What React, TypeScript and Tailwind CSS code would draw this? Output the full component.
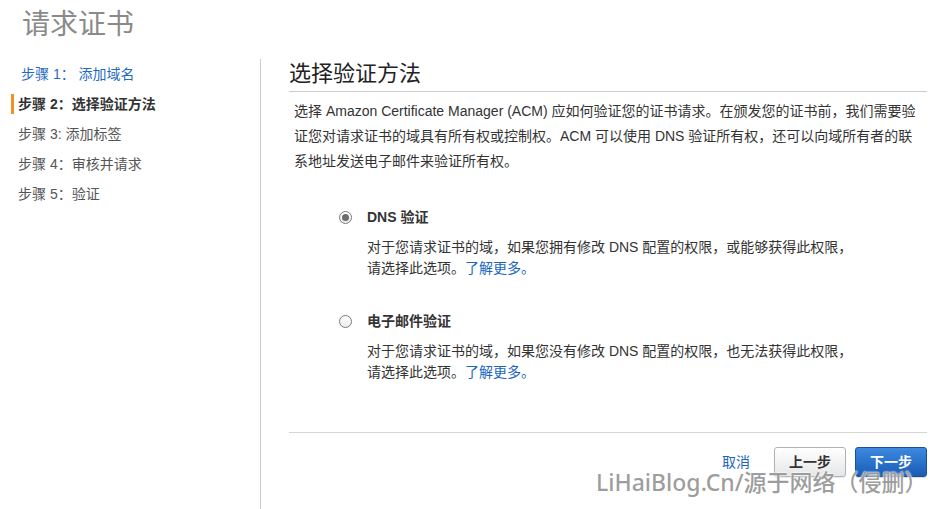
import React from "react";

const font = { fontFamily: '"Liberation Sans", "Noto Sans CJK SC", sans-serif' };

function Radio({ checked }: { checked: boolean }) {
  return (
    <div className="w-[13px] h-[13px] rounded-full border border-[#7a7a7a] bg-gradient-to-b from-[#ffffff] to-[#ececec] flex items-center justify-center shrink-0">
      {checked && <div className="w-[7px] h-[7px] rounded-full bg-[#6b6b6b]" />}
    </div>
  );
}

function Option({ checked, label, line1 }: { checked: boolean; label: string; line1: string }) {
  return (
    <div className="pl-[50px]">
      <div className="flex items-center h-[20px]">
        <Radio checked={checked} />
        <span className="ml-[15px] text-[14px] font-bold text-[#333]">{label}</span>
      </div>
      <div className="pl-[28px] mt-[10px] text-[14px] leading-[21px] text-[#333]">
        <div className="whitespace-nowrap">{line1}</div>
        <div className="whitespace-nowrap">
          请选择此选项。<span className="text-[#1a66c0]">了解更多。</span>
        </div>
      </div>
    </div>
  );
}

export default function App() {
  return (
    <div className="relative w-[941px] h-[509px] bg-white overflow-hidden" style={font}>
      <div className="h-[59px] pl-[22px] pt-[5px] text-[28px] leading-[40px] text-[#8a8a8a]">请求证书</div>
      <div className="flex h-[450px]">
        <div className="w-[261px] border-r border-[#cccccc] h-full text-[14px] leading-[30px]">
          <div className="pl-[21px] text-[#1f6bbf]">步骤 1：&nbsp;添加域名</div>
          <div className="relative pl-[18px] font-bold text-[#333]">
            <div className="absolute left-[11px] top-[5px] w-[3px] h-[20px] bg-[#f29226]" />
            步骤 2：选择验证方法
          </div>
          <div className="pl-[18px] text-[#555]">步骤 3: 添加标签</div>
          <div className="pl-[18px] text-[#555]">步骤 4：审核并请求</div>
          <div className="pl-[18px] text-[#555]">步骤 5：验证</div>
        </div>
        <div className="flex-1 pl-[28px] pr-[14px]">
          <div className="h-[33px] border-b border-[#cccccc] text-[22px] leading-[29px] text-[#222]">选择验证方法</div>
          <div className="mt-[7px] pl-[5px] text-[14px] leading-[25px] text-[#333]">
            <div className="whitespace-nowrap">选择 Amazon Certificate Manager (ACM) 应如何验证您的证书请求。在颁发您的证书前，我们需要验</div>
            <div className="whitespace-nowrap">证您对请求证书的域具有所有权或控制权。ACM 可以使用 DNS 验证所有权，还可以向域所有者的联</div>
            <div className="whitespace-nowrap">系地址发送电子邮件来验证所有权。</div>
          </div>
          <div className="mt-[33px]">
            <Option checked label="DNS 验证" line1="对于您请求证书的域，如果您拥有修改 DNS 配置的权限，或能够获得此权限，" />
          </div>
          <div className="mt-[32px]">
            <Option checked={false} label="电子邮件验证" line1="对于您请求证书的域，如果您没有修改 DNS 配置的权限，也无法获得此权限，" />
          </div>
          <div className="mt-[49px] border-t border-[#d5d5d5]" />
          <div className="mt-[14px] flex items-center justify-end">
            <span className="text-[14px] text-[#1a66c0] mr-[24px]">取消</span>
            <button className="w-[72px] h-[30px] rounded-[3px] border border-[#aeb3b9] bg-gradient-to-b from-[#ffffff] to-[#e6e6e6] text-[14px] font-bold text-[#333] shadow-[0_1px_1px_rgba(0,0,0,0.1)]">
              上一步
            </button>
            <button className="ml-[9px] w-[72px] h-[30px] rounded-[3px] border border-[#1d4f92] bg-gradient-to-b from-[#3d8ae0] to-[#1a5cb5] text-[14px] font-bold text-white shadow-[0_1px_1px_rgba(0,0,0,0.15)]">
              下一步
            </button>
          </div>
        </div>
      </div>
      <div
        className="absolute left-[596px] top-[466px] text-[23px] leading-[32px] font-medium text-[rgba(140,140,140,0.85)] whitespace-nowrap"
        style={{ fontFamily: '"Noto Sans", "Noto Sans CJK SC", sans-serif', textShadow: "0 0 2px #fff, 0 0 2px #fff" }}
      >
        LiHaiBlog.Cn/源于网络（侵删）
      </div>
    </div>
  );
}
